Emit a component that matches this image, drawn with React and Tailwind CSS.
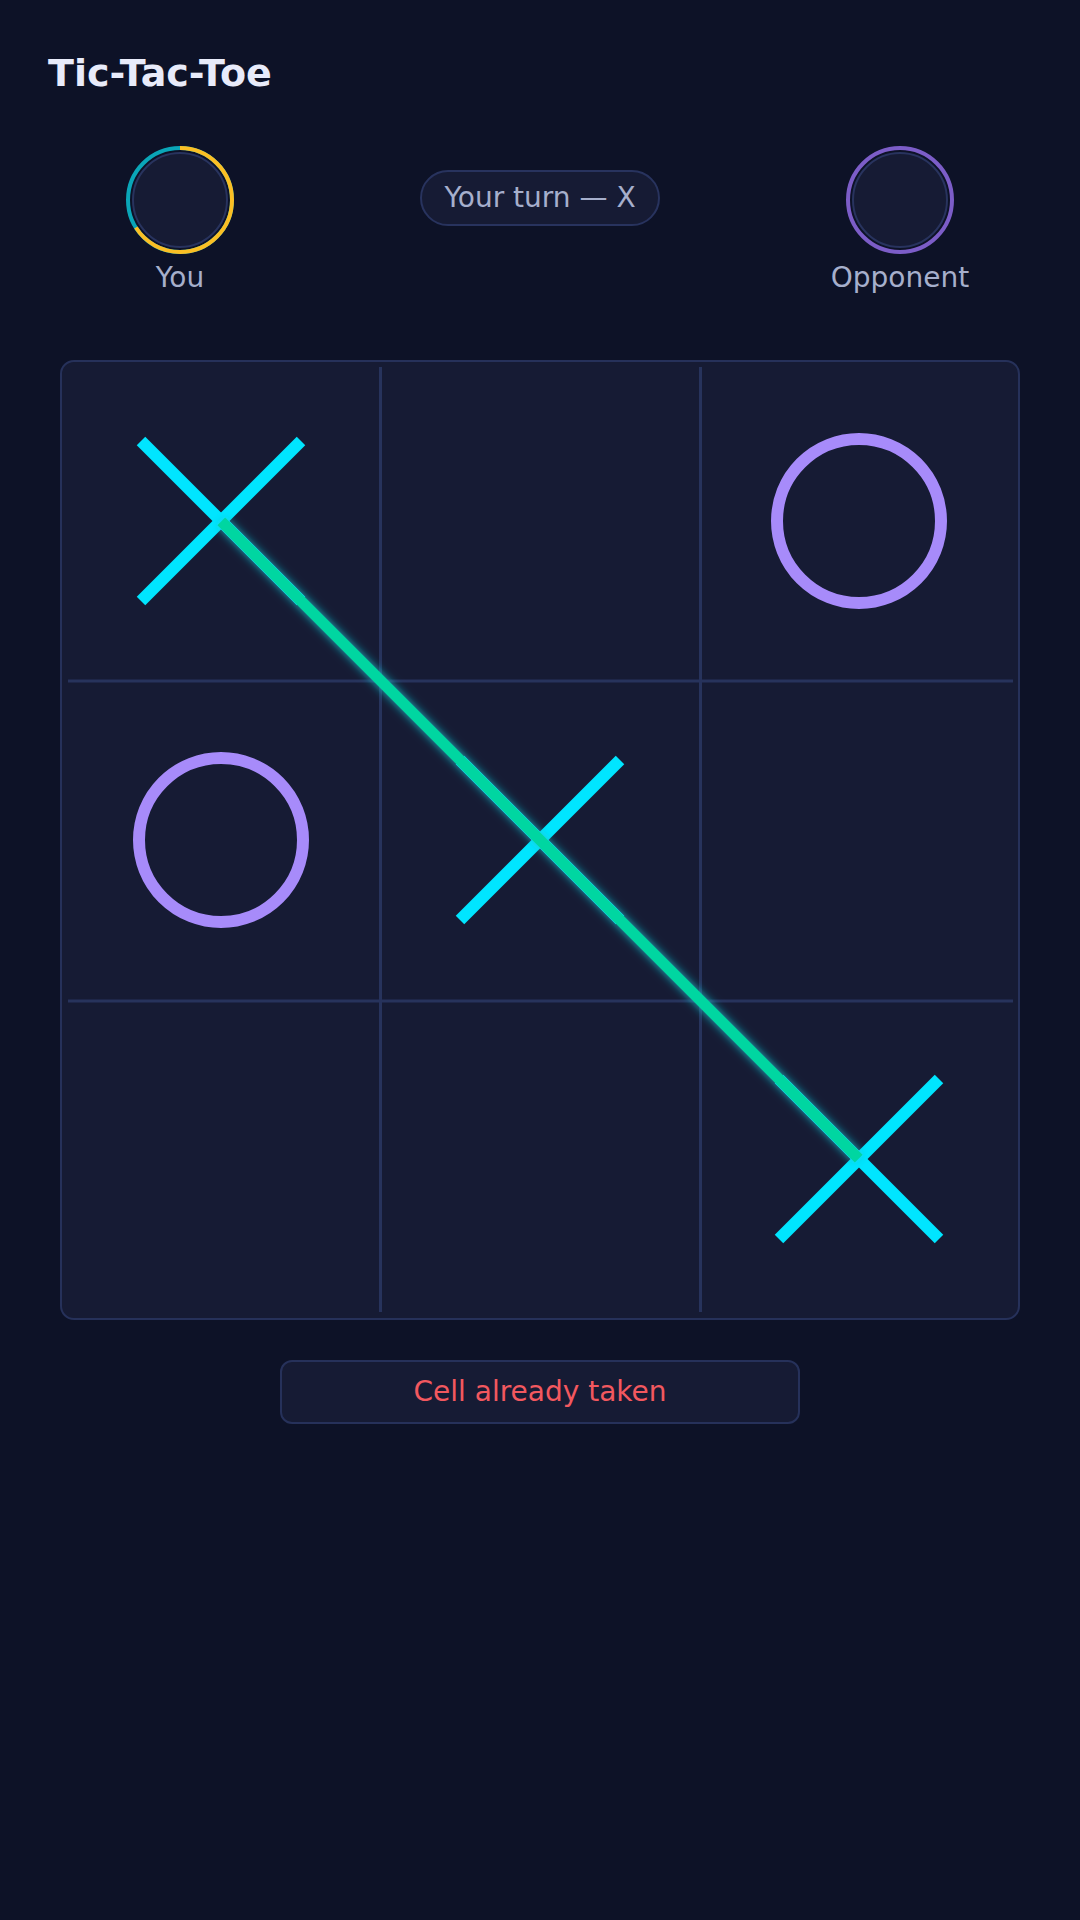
const board = ["x", "", "o", "o", "x", "", "", "", "x"];

function Avatar({ label, track, arc, fraction = 0 }) {
  const circ = 2 * Math.PI * 52;
  return (
    <div className="flex w-[160px] flex-col items-center">
      <div className="relative flex h-[108px] w-[108px] items-center justify-center">
        <svg className="absolute inset-0" width="108" height="108" viewBox="0 0 108 108">
          <circle cx="54" cy="54" r="52" fill="none" stroke={track} strokeWidth="4" />
          {arc && (
            <circle
              cx="54"
              cy="54"
              r="52"
              fill="none"
              stroke={arc}
              strokeWidth="4"
              strokeDasharray={`${circ * fraction} ${circ}`}
              transform="rotate(-90 54 54)"
            />
          )}
        </svg>
        <div className="h-24 w-24 rounded-full border-2 border-[#28335e] bg-[#161b34]" />
      </div>
      <span className="mt-[10px] text-[28px] leading-none text-[#a6afcc]">{label}</span>
    </div>
  );
}

function Mark({ value }) {
  if (value === "x") {
    return (
      <svg width="180" height="180" viewBox="-90 -90 180 180">
        <line x1="-80" y1="-80" x2="80" y2="80" stroke="#00e5ff" strokeWidth="12" />
        <line x1="80" y1="-80" x2="-80" y2="80" stroke="#00e5ff" strokeWidth="12" />
      </svg>
    );
  }
  if (value === "o") {
    return (
      <svg width="180" height="180" viewBox="-90 -90 180 180">
        <circle cx="0" cy="0" r="82" fill="none" stroke="#a78bfa" strokeWidth="12" />
      </svg>
    );
  }
  return null;
}

export default function App() {
  return (
    <div className="min-h-[1920px] w-full bg-[#0d1227] font-['DejaVu_Sans',sans-serif]">
      {/* Title */}
      <h1 className="px-12 pt-[54px] text-[38px] font-bold leading-none text-[#e8ebfa]">
        Tic-Tac-Toe
      </h1>

      {/* Players */}
      <div className="mt-[54px] flex items-start justify-between px-[100px]">
        <Avatar label="You" track="#0aa6b8" arc="#fbbf24" fraction={0.66} />
        <div className="mt-6 flex h-[56px] items-center rounded-full border-2 border-[#28335e] bg-[#161b34] px-[22px] text-[28px] leading-none text-[#a6afcc]">
          Your turn — X
        </div>
        <Avatar label="Opponent" track="#7c5dc8" />
      </div>

      {/* Board */}
      <div className="mx-auto mt-[68px] w-[960px]">
        <div className="relative h-[960px] w-[960px] rounded-[14px] border-2 border-[#26315a] bg-[#161b34]">
          <svg className="absolute inset-0" width="956" height="956" viewBox="0 0 956 956">
            <line x1="318.5" y1="5" x2="318.5" y2="950" stroke="#27335c" strokeWidth="3" />
            <line x1="638.5" y1="5" x2="638.5" y2="950" stroke="#27335c" strokeWidth="3" />
            <line x1="6" y1="319" x2="951" y2="319" stroke="#27335c" strokeWidth="3" />
            <line x1="6" y1="639" x2="951" y2="639" stroke="#27335c" strokeWidth="3" />
          </svg>
          <div className="grid h-full grid-cols-3 grid-rows-3">
            {board.map((v, i) => (
              <div key={i} className="flex items-center justify-center">
                <Mark value={v} />
              </div>
            ))}
          </div>
          <svg className="pointer-events-none absolute inset-0" width="956" height="956" viewBox="0 0 956 956">
            <defs>
              <filter id="glow" x="-20%" y="-20%" width="140%" height="140%">
                <feGaussianBlur in="SourceAlpha" stdDeviation="5" result="blur" />
                <feFlood floodColor="#19c6d6" floodOpacity="0.9" />
                <feComposite in2="blur" operator="in" result="shadow" />
                <feMerge>
                  <feMergeNode in="shadow" />
                  <feMergeNode in="SourceGraphic" />
                </feMerge>
              </filter>
            </defs>
            <line
              x1="159.3"
              y1="159.3"
              x2="796.7"
              y2="796.7"
              stroke="#00d6a1"
              strokeWidth="11"
              filter="url(#glow)"
            />
          </svg>
        </div>
      </div>

      {/* Status */}
      <div className="mx-auto mt-10 flex h-[64px] w-[520px] items-center justify-center rounded-xl border-2 border-[#26315a] bg-[#161b34] text-[28px] leading-none text-[#f2585f]">
        Cell already taken
      </div>
    </div>
  );
}
